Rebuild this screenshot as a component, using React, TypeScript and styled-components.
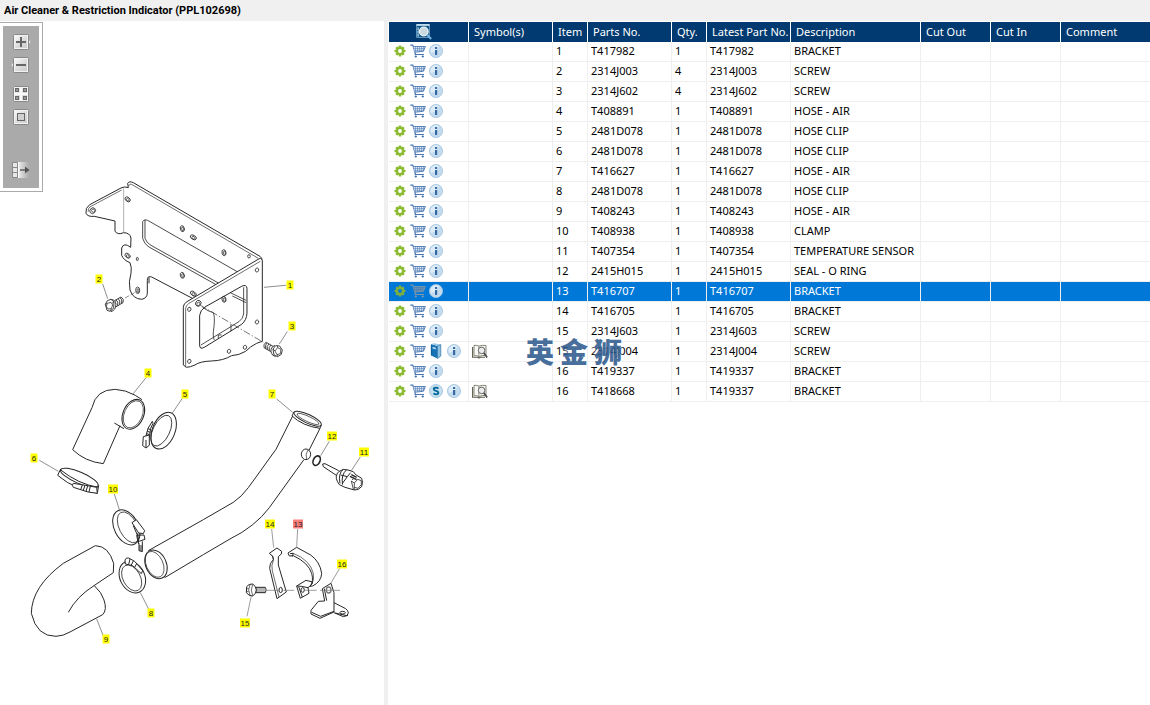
import React, { useState } from "react";
import styled, { createGlobalStyle } from "styled-components";

const GlobalStyle = createGlobalStyle`
  *, *::before, *::after { box-sizing: border-box; }
  html, body, #root { height: 100%; }
  body {
    margin: 0;
    background: #fff;
    color: #000;
    font-family: "Noto Sans", "Noto Sans CJK SC", sans-serif;
    font-size: 11px;
  }
`;

const Page = styled.div`
  display: flex;
  flex-direction: column;
  min-height: 100%;
`;

const TitleBar = styled.h1`
  margin: 0;
  height: 21px;
  padding: 0 4px;
  background: #f0f0f0;
  font-family: Roboto, sans-serif;
  font-size: 11px;
  font-weight: 700;
  line-height: 22px;
`;

const Split = styled.main`
  display: flex;
  flex: 1;
`;

const DrawingPane = styled.section`
  position: relative;
  flex: 0 0 384px;
`;

const Splitter = styled.div`
  flex: 0 0 4px;
  background: #f0f0f0;
`;

const ListPane = styled.section`
  position: relative;
  flex: 1;
  min-width: 0;
  padding: 1px 0 0 1px;
`;

const ToolFrame = styled.div`
  position: absolute;
  top: 1px;
  left: 0;
  padding: 3px;
  border: 1px solid #aaa;
  border-left: 0;
`;

const ToolBar = styled.div`
  display: flex;
  flex-direction: column;
  align-items: center;
  gap: 5px;
  width: 36px;
  height: 162px;
  padding-top: 7px;
  background: #aaa;
`;

const ToolButton = styled.button<{ $before?: number }>`
  display: block;
  width: 20px;
  height: 18px;
  margin: ${(p) => p.$before ?? 0}px 0 0;
  padding: 0;
  border: 0;
  background: none;
  cursor: pointer;
`;

const Drawing = styled.svg`
  display: block;
  width: 384px;
  height: 684px;
`;

const Table = styled.table`
  width: 100%;
  table-layout: fixed;
  border-collapse: separate;
  border-spacing: 0;
`;

const Col = styled.col<{ $w?: number }>`
  width: ${(p) => (p.$w ? `${p.$w}px` : "auto")};
`;

const HeadCell = styled.th<{ $icon?: boolean }>`
  height: 20px;
  padding: 0 0 0 ${(p) => (p.$icon ? 26 : 5)}px;
  border-right: 1px solid #fff;
  background: #003a70;
  color: #fff;
  font-weight: 400;
  line-height: 18px;
  text-align: left;
  white-space: nowrap;
  &:last-child { border-right: 0; }
`;

const Row = styled.tr<{ $selected: boolean }>`
  background: ${(p) => (p.$selected ? "#0078d7" : "#fff")};
  color: ${(p) => (p.$selected ? "#fff" : "#000")};
`;

const Cell = styled.td`
  height: 20px;
  padding: 0 0 2px 3px;
  border-right: 1px solid #efefef;
  border-bottom: 1px solid #efefef;
  line-height: 16px;
  white-space: nowrap;
  &:last-child { border-right: 0; }
`;

const IconCell = styled(Cell)`
  padding: 0 0 1px 2px;
`;

const Actions = styled.div`
  display: flex;
`;

const IconButton = styled.button`
  display: flex;
  align-items: center;
  justify-content: center;
  width: 18px;
  height: 18px;
  padding: 0;
  border: 0;
  background: none;
  cursor: pointer;
`;

const Watermark = styled.div`
  position: absolute;
  top: 317px;
  left: 138px;
  display: flex;
  gap: 6px;
  color: #2f5b8e;
  font-family: "Noto Sans CJK SC", sans-serif;
  font-size: 28px;
  font-weight: 900;
  line-height: 26px;
  opacity: 0.88;
  pointer-events: none;
  text-shadow: 0 0 3px rgba(255, 255, 255, 0.8), 0 0 3px rgba(255, 255, 255, 0.8);
`;

/* ---------- icons ---------- */

const GearIcon = ({ dim }: { dim: boolean }) => (
  <svg width="12" height="12" viewBox="0 0 12 12" aria-hidden="true">
    <g fill={dim ? "#7fb03c" : "#8aba2e"}>
      {[0, 45, 90, 135].map((a) => (
        <rect key={a} x="4.7" y="0.6" width="2.6" height="10.8" rx="0.6" transform={`rotate(${a} 6 6)`} />
      ))}
      <circle cx="6" cy="6" r="4" />
    </g>
    <circle cx="6" cy="6" r="1.9" fill={dim ? "#0078d7" : "#fff"} />
  </svg>
);

const CartIcon = ({ dim }: { dim: boolean }) => {
  const c = dim ? "#7f95a8" : "#4877b2";
  return (
    <svg width="16" height="14" viewBox="0 0 16 14" aria-hidden="true" fill="none" stroke={c}>
      <path d="M0.3 1.2H2.8L5.6 10.6M4.6 10.5H14" strokeWidth="1.2" />
      <path d="M3.4 2.5H15.4L13.4 7.3L4.9 8.2" fill={dim ? "#3f7fb8" : "#dde8f4"} strokeWidth="0.9" />
      <path d="M5.5 2.5V8M7.5 2.5V8M9.5 2.5V7.8M11.5 2.5V7.6M13.5 2.5V7M4 4.5H14.5M4.5 6.3H13.8" strokeWidth="0.5" />
      <circle cx="5.8" cy="12.5" r="0.7" fill={c} />
      <circle cx="12.8" cy="12.5" r="0.7" fill={c} />
    </svg>
  );
};

const InfoIcon = () => (
  <svg width="14" height="14" viewBox="0 0 14 14" aria-hidden="true">
    <circle cx="7" cy="7" r="6.6" fill="#c3dbee" stroke="#a3c4e0" strokeWidth="0.8" />
    <path d="M2 9A5.5 5.5 0 0 1 10 2.3Q10 7 2 9Z" fill="#deedf8" />
    <rect x="6" y="3" width="2.2" height="2" fill="#356aa5" />
    <path d="M6 6H8.2V11H6Z" fill="#356aa5" />
  </svg>
);

const SuperIcon = () => (
  <svg width="14" height="14" viewBox="0 0 14 14" aria-hidden="true">
    <circle cx="7" cy="7" r="6.6" fill="#c3dfee" stroke="#a3c4e0" strokeWidth="0.8" />
    <path d="M9.3 4.6Q8.6 3.7 7 3.7Q4.8 3.7 4.8 5.2Q4.8 6.4 7 6.9Q9.4 7.5 9.4 8.8Q9.4 10.3 7 10.3Q5.2 10.3 4.6 9.3" fill="none" stroke="#00659b" strokeWidth="1.8" />
  </svg>
);

const BookIcon = () => (
  <svg width="12" height="16" viewBox="0 0 12 16" aria-hidden="true">
    <path d="M1 1L7.5 3V15.5L1 12.5Z" fill="#1672b5" />
    <path d="M1 1L4 0.3L10.8 1.6L7.5 3Z" fill="#9cc9e5" />
    <path d="M7.5 3L10.8 1.6V13L7.5 15.5Z" fill="#8cc1e2" stroke="#16629b" strokeWidth="0.6" />
    <path d="M2.6 3.7L5.8 4.7V6.6L2.6 5.5Z" fill="#b8ddf2" />
    <path d="M1.3 2V12.2" stroke="#0a5590" strokeWidth="0.7" />
  </svg>
);

const OpenBookIcon = () => (
  <svg width="16" height="15" viewBox="0 0 16 15" aria-hidden="true" fill="none">
    <path d="M2 1.5Q5 0.8 7 2.2Q10 0.8 14 1.5V11.5Q10 11 7 12.5Q4.5 11.2 2 11.8Z" fill="#f8f8f5" stroke="#77776c" strokeWidth="0.9" />
    <path d="M0.6 3V13.3H6L7 14L8.5 13.3H13" stroke="#5c5c4c" strokeWidth="1.1" />
    <path d="M6.8 2.3V12.4" stroke="#77776c" strokeWidth="0.8" />
    <circle cx="9.6" cy="6.4" r="3.3" fill="#ececec" stroke="#666" strokeWidth="1" />
    <path d="M11.8 9L15.2 13.6" stroke="#444" strokeWidth="1.6" />
  </svg>
);

const SearchSheetIcon = () => (
  <svg width="16" height="16" viewBox="0 0 16 16" aria-hidden="true" fill="none">
    <path d="M0.5 0.5H13.5V13.5H0.5Z" fill="#0f568a" stroke="#5c91b8" />
    <path d="M0.5 1H13.5" stroke="#d8edf8" strokeWidth="1.6" />
    <path d="M2.2 3V13M0.8 5H3M0.8 8H3M0.8 11H3" stroke="#a8cbe0" strokeWidth="0.9" />
    <circle cx="7.8" cy="7.5" r="4.3" fill="#cad8e0" stroke="#eef6fa" strokeWidth="1.3" />
    <path d="M11.2 11L15.2 15" stroke="#72b3df" strokeWidth="2" />
  </svg>
);

type ToolKind = "in" | "out" | "grid" | "fit" | "panel";

const ToolIcon = ({ kind }: { kind: ToolKind }) => (
  <svg width="20" height="18" viewBox="0 0 20 18" aria-hidden="true" fill="none">
    <defs>
      <linearGradient id={`face-${kind}`} x1="0" y1="0" x2="1" y2="1">
        <stop offset="0" stopColor="#fff" />
        <stop offset="0.5" stopColor="#ddd" />
        <stop offset="1" stopColor="#c8c8c8" />
      </linearGradient>
      <linearGradient id={`fade-${kind}`} x1="0" y1="0" x2="1" y2="0">
        <stop offset="0" stopColor="#eee" />
        <stop offset="1" stopColor="#aaa" />
      </linearGradient>
    </defs>
    {kind === "in" && <path d="M17 6L19.5 9L17 12Z" fill="#eee" />}
    {kind === "out" && <path d="M3 6L0.5 9L3 12Z" fill="#eee" />}
    {kind !== "panel" && (
      <rect x="2.5" y="1.5" width="15" height="15" rx="1" fill={`url(#face-${kind})`} stroke="#888" />
    )}
    {kind !== "panel" && <rect x="3.5" y="2.5" width="13" height="13" stroke="#f2f2f2" />}
    {kind === "in" && <path d="M5 9H15M10 4V14" stroke="#666" strokeWidth="2" />}
    {kind === "out" && <path d="M5 9H15" stroke="#666" strokeWidth="2" />}
    {kind === "fit" && <rect x="6.5" y="5.5" width="7" height="7" fill="#d0d0d0" stroke="#666" />}
    {kind === "grid" && (
      <>
        <path d="M10 2V16M3 9H17" stroke="#f8f8f8" strokeWidth="2" />
        <g fill="#999" stroke="#666">
          <rect x="4.5" y="3.5" width="3" height="3" />
          <rect x="12.5" y="3.5" width="3" height="3" />
          <rect x="4.5" y="11.5" width="3" height="3" />
          <rect x="12.5" y="11.5" width="3" height="3" />
        </g>
      </>
    )}
    {kind === "panel" && (
      <>
        <rect x="7" y="1" width="11" height="16" fill={`url(#fade-${kind})`} />
        <path d="M1.5 1.5H6.5V16.5H1.5ZM1.5 6.5H6.5M1.5 11.5H6.5" fill="#e8e8e8" stroke="#888" />
        <path d="M7.5 1V17" stroke="#fff" />
        <path d="M9 9H16" stroke="#555" strokeWidth="1.4" />
        <path d="M14 5.5L18.5 9L14 12.5Z" fill="#555" />
      </>
    )}
  </svg>
);

/* ---------- exploded view ---------- */

const callouts: [string, number, number][] = [
  ["1", 290, 285], ["2", 99, 279], ["3", 292, 326], ["4", 148, 373], ["5", 185, 394],
  ["6", 34, 458], ["7", 272, 394], ["8", 151, 613], ["9", 106, 639], ["10", 113, 489],
  ["11", 364, 452], ["12", 332, 436], ["13", 298, 524], ["14", 270, 524], ["15", 245, 623], ["16", 342, 564],
];

const holes: [number, number, number, number, number][] = [
  [53, 122, 9, 8, -45], [158, 88, 9, 6, 40], [322, 176, 6, 9, -15], [355, 202, 10, 6, 30], [447, 248, 6, 9, -10],
  [522, 259, 4, 5, 0], [158, 257, 9, 6, 40], [187, 267, 3, 5, 0], [322, 316, 6, 9, -15], [188, 361, 6, 10, 0],
  [355, 371, 10, 6, 35], [370, 400, 8, 9, 30], [343, 418, 5, 6, 20], [546, 300, 5, 6, 20], [546, 456, 5, 6, 20],
  [510, 532, 5, 6, 20], [462, 544, 5, 6, 20], [343, 574, 5, 6, 20], [447, 388, 6, 9, -10],
];

const ExplodedView = () => (
  <Drawing viewBox="0 21 384 684" role="img" aria-label="Exploded view">
    <g fill="none" stroke="#262626" strokeWidth="3" strokeLinejoin="round">
      <g transform="translate(75 170) scale(.3333)">
        <path d="M160 53Q150 48 138 54L44 104Q30 114 33 130Q38 141 58 139L120 153L120 184Q130 196 145 188Q165 188 168 204L167 232Q146 216 140 234L140 256Q146 271 165 278Q171 292 168 310Q160 335 165 360Q174 387 200 388Q216 385 217 370L217 332Q216 316 230 321L375 397" />
        <path d="M160 53L158 40Q163 32 175 38L555 259Q563 264 560 273" />
        <path d="M160 47L168 42L550 265M40 125Q38 113 50 108L140 60" strokeWidth="2" />
        <path d="M146 55V190" stroke="#888" strokeWidth="2" />
        <path d="M490 307L225 155Q208 144 203 155V205Q207 222 222 231L425 345M210 150V205Q214 218 228 226L432 340" strokeWidth="2.5" />
        <path d="M222 340L222 322" />
        <path d="M325 585V412Q325 401 336 395L546 270Q560 260 562 272V514L545 520Q525 530 512 544Q492 556 470 557Q445 572 410 573Q375 574 360 585Q345 592 334 592Z" fill="#fff" />
        <path d="M332 590V415Q333 406 342 400L556 274" strokeWidth="2" />
        <path d="M374 525V436Q376 420 390 411L500 349Q515 342 516 355V430Q515 450 500 463L388 532Q374 540 374 525Z" />
        <path d="M506 352V432Q504 446 492 455L378 525M382 411Q400 425 415 428Q420 440 417 470Q412 500 418 510M466 368L513 391M472 378L513 398M468 462V484M430 505V495H440" strokeWidth="2.4" />
        {holes.map(([x, y, rx, ry, a]) => (
          <g key={`${x}-${y}`} transform={`rotate(${a} ${x} ${y})`}>
            <ellipse cx={x} cy={y} rx={rx} ry={ry} strokeWidth="2.4" />
            {rx > 5 && <ellipse cx={x + 1} cy={y + 1} rx={rx / 2} ry={ry / 1.6} strokeWidth="2" />}
          </g>
        ))}
        <g strokeWidth="2.6">
          <path d="M119 392L138 381Q149 387 144 398L122 411Z" fill="#fff" />
          <path d="M123 389Q131 395 128 407M129 386Q137 391 134 403M135 383Q143 388 140 400" />
          <path d="M106 388Q122 388 123 404Q122 421 108 425" fill="#fff" />
          <path d="M91 403L97 392L108 388L117 396L116 414L106 424L96 421Z" fill="#fff" />
          <path d="M97 400L108 397L113 405L109 416L99 417L94 409ZM91 403L97 400M117 396L111 400M106 424L109 416" strokeWidth="2.2" />
          <path d="M594 529L574 517Q564 522 568 534L590 546Z" fill="#fff" />
          <path d="M588 525Q580 531 583 542M582 522Q574 528 577 539M576 519Q570 524 572 536" />
          <path d="M600 526Q586 532 588 546Q591 558 602 560" fill="#fff" />
          <path d="M594 537L602 527L614 528L622 540L619 553L608 560L597 555Z" fill="#fff" />
          <path d="M600 543L608 533L618 538L616 551L606 554ZM594 537L600 543M608 533L607 527M606 554L608 560" strokeWidth="2.2" />
        </g>
        <g stroke="#666" strokeWidth="2.2">
          <path d="M567 352L633 346M83 342L98 386M637 485L613 522" />
          <path d="M375 405L565 517" strokeDasharray="22 6 4 6" stroke="#444" />
          <path d="M150 384L190 362" strokeDasharray="14 5" />
        </g>
      </g>

      <g transform="translate(20 360) scale(.3333)">
        <path d="M158 269L216 143Q228 88 286 88Q318 90 346 106L366 119M158 269Q195 305 250 311L300 197M283 189L312 206" />
        <ellipse cx="340" cy="163" rx="31" ry="47" transform="rotate(24 340 163)" />
        <ellipse cx="340" cy="163" rx="27" ry="43" transform="rotate(24 340 163)" strokeWidth="2" />
        <ellipse cx="431" cy="212" rx="34" ry="58" transform="rotate(22 431 212)" />
        <ellipse cx="424" cy="212" rx="25" ry="50" transform="rotate(26 424 212)" strokeWidth="2.4" />
        <path d="M397 184L384 205L378 228L388 233L392 205L399 190Z" fill="#fff" />
        <path d="M370 230L388 225V256L378 264L368 257ZM378 240V262M384 206L392 209M382 214L391 217M380 221L389 224" fill="#fff" />
        <ellipse cx="178" cy="353" rx="61" ry="17" transform="rotate(23 178 353)" />
        <path d="M122 327L113 346Q140 370 175 383L232 400L236 376M122 330Q175 372 234 382" />
        <path d="M160 370L196 376L230 382L232 400L204 396L160 382Q154 376 160 370Z" fill="#fff" />
        <path d="M187 375L182 389M195 376L190 391M203 378L198 394M211 379L207 396" />
        <path d="M379 52L338 103M487 115L455 162M58 301L115 334" stroke="#666" strokeWidth="2.2" />
      </g>

      <g transform="translate(20 480) scale(.3333)">
        <path d="M226 197Q266 198 281 250L280 278L222 317Q170 350 145 397M226 197L130 250Q35 320 34 400Q50 470 108 469Q130 468 150 456L248 404Q262 390 252 360Q246 338 223 317" />
        <ellipse cx="408" cy="253" rx="31" ry="45" transform="rotate(-24 408 253)" />
        <ellipse cx="404" cy="253" rx="25" ry="41" transform="rotate(-24 404 253)" strokeWidth="2" />
        <path d="M385 212L550 119M434 293L550 224" />
        <ellipse cx="337" cy="291" rx="37" ry="50" transform="rotate(-26 337 291)" />
        <ellipse cx="335" cy="294" rx="26" ry="42" transform="rotate(-28 335 294)" strokeWidth="2.2" />
        <path d="M315 240Q318 232 326 234L344 244L368 272L364 281L338 257L316 252Z" fill="#fff" />
        <path d="M330 237L326 254M340 243L333 257M350 251L344 262" />
        <ellipse cx="319" cy="142" rx="36" ry="56" transform="rotate(-27 319 142)" />
        <ellipse cx="325" cy="142" rx="27" ry="50" transform="rotate(-27 325 142)" strokeWidth="2.2" />
        <path d="M336 128L349 119L374 152L370 161L356 159Z" fill="#fff" />
        <path d="M350 166L372 165L375 178L354 185ZM352 160L356 192M357 190V212L367 215V184M357 198H367M357 204H367M357 210H367M340 137L352 165" />
        <path d="M283 42L300 95M386 387L361 338M250 468L230 417" stroke="#666" strokeWidth="2.2" />
      </g>

      <g transform="translate(190 380) scale(.3333)">
        <ellipse cx="353" cy="116" rx="45" ry="13" transform="rotate(25 353 116)" />
        <ellipse cx="354" cy="117" rx="36" ry="8" transform="rotate(25 354 117)" strokeWidth="2" />
        <path d="M312 96L306 108Q338 138 390 145L394 135M308 108L258 208L175 323Q155 350 130 367L40 419M390 145L357 211M341 240L238 383Q195 440 120 477L40 524" />
        <ellipse cx="348" cy="223" rx="14" ry="16" />
        <path d="M354 210Q345 222 350 237" strokeWidth="2" />
        <ellipse cx="380" cy="242" rx="10" ry="15" transform="rotate(25 380 242)" strokeWidth="5" />
        <path d="M398 252L405 251L446 272M398 252L400 260L439 286" />
        <path d="M442 304Q434 288 446 275Q460 264 474 270L490 275L497 284L515 295Q520 306 515 320Q504 332 493 330L465 322L448 314Z" fill="#fff" />
        <path d="M460 268Q444 280 450 310M470 269Q452 285 458 314M452 285L472 290L482 278M456 312L472 290" />
        <path d="M493 309L503 298L514 302L514 314L504 325L493 322ZM493 309L484 303M493 330V322M484 303L490 328" strokeWidth="2.4" />
        <path d="M480 289L500 299M484 284L500 292M488 293V299" strokeWidth="4" />
        <path d="M260 57L308 97M418 184L392 227M511 231L484 272" stroke="#666" strokeWidth="2.2" />
      </g>

      <g transform="translate(230 510) scale(.3333)">
        <path d="M118 130L141 114L155 124L154 132L145 140V165L169 246L141 266L119 175Q118 160 130 149L127 138Z" />
        <path d="M124 134Q134 140 130 152Q123 165 127 182L147 261" strokeWidth="2" />
        <ellipse cx="152" cy="240" rx="5" ry="8" />
        <path d="M174 129L200 112L242 135Q270 155 275 190Q274 215 248 228L240 229Q252 215 245 190Q235 158 190 137L178 138ZM180 131L190 130L187 140" />
        <path d="M190 130Q240 150 250 190Q253 208 246 222" strokeWidth="2" />
        <path d="M200 228L228 211L248 216L244 225L234 233L237 250L211 265ZM200 228L214 229L234 233M206 230L217 261" />
        <ellipse cx="218" cy="240" rx="5" ry="7" />
        <path d="M284 273L277 236L303 220L312 248V306L270 325L243 312V301L265 274L284 273M312 278L347 296Q361 307 350 317L316 309M312 308L340 320L354 316M245 307L272 319L312 304M283 236L290 272" />
        <ellipse cx="296" cy="240" rx="7" ry="9" strokeWidth="4" stroke="#777" />
        <ellipse cx="338" cy="308" rx="8" ry="4" />
        <path d="M78 232H106Q111 240 106 248H78Z" fill="#fff" />
        <path d="M84 232V248M90 232V248M96 232V248M102 232V248" strokeWidth="2" />
        <path d="M50 230Q56 221 68 222Q78 228 79 240Q78 253 68 258Q56 258 49 248Z" fill="#fff" />
        <path d="M60 224Q52 240 60 256M68 223Q60 240 68 257M50 236H56M50 245H56" strokeWidth="2" />
        <path d="M110 241H148M160 241H192M222 241H260M270 241H330M125 57L131 113M203 57L200 110M329 175L303 219M51 319L64 257" stroke="#777" strokeWidth="2.2" />
      </g>
    </g>
    <g fontFamily="Liberation Sans, sans-serif" fontSize="8" textAnchor="middle">
      {callouts.map(([n, x, y]) => {
        const w = n.length > 1 ? 10 : 7;
        return (
          <g key={n}>
            <rect x={x - w / 2} y={y - 4.5} width={w} height="9" fill={n === "13" ? "#f97e7e" : "#ff0"} />
            <text x={x} y={y + 3} fill="#222">{n}</text>
          </g>
        );
      })}
    </g>
  </Drawing>
);

/* ---------- parts list ---------- */

interface Part {
  item: string;
  no: string;
  qty: string;
  latest: string;
  name: string;
  extra?: "book" | "super";
}

const part = (item: string, no: string, name: string, qty = "1", latest = no, extra?: Part["extra"]): Part => ({
  item, no, qty, latest, name, extra,
});

const parts: Part[] = [
  part("1", "T417982", "BRACKET"),
  part("2", "2314J003", "SCREW", "4"),
  part("3", "2314J602", "SCREW", "4"),
  part("4", "T408891", "HOSE - AIR"),
  part("5", "2481D078", "HOSE CLIP"),
  part("6", "2481D078", "HOSE CLIP"),
  part("7", "T416627", "HOSE - AIR"),
  part("8", "2481D078", "HOSE CLIP"),
  part("9", "T408243", "HOSE - AIR"),
  part("10", "T408938", "CLAMP"),
  part("11", "T407354", "TEMPERATURE SENSOR"),
  part("12", "2415H015", "SEAL - O RING"),
  part("13", "T416707", "BRACKET"),
  part("14", "T416705", "BRACKET"),
  part("15", "2314J603", "SCREW"),
  part("15", "2314J004", "SCREW", "1", "2314J004", "book"),
  part("16", "T419337", "BRACKET"),
  part("16", "T418668", "BRACKET", "1", "T419337", "super"),
];

const columns: [string, number?][] = [
  ["Symbol(s)", 84], ["Item", 35], ["Parts No.", 84], ["Qty.", 35], ["Latest Part No.", 84],
  ["Description", 130], ["Cut Out", 70], ["Cut In", 70], ["Comment"],
];

const tools: { kind: ToolKind; label: string; before?: number }[] = [
  { kind: "in", label: "Zoom in" },
  { kind: "out", label: "Zoom out" },
  { kind: "grid", label: "Show all", before: 6 },
  { kind: "fit", label: "Fit to window" },
  { kind: "panel", label: "Toggle list", before: 30 },
];

export default function App() {
  const [selected, setSelected] = useState(12);
  return (
    <Page>
      <GlobalStyle />
      <TitleBar>Air Cleaner &amp; Restriction Indicator (PPL102698)</TitleBar>
      <Split>
        <DrawingPane>
          <ExplodedView />
          <ToolFrame>
            <ToolBar role="toolbar" aria-label="Drawing tools">
              {tools.map((t) => (
                <ToolButton key={t.kind} type="button" aria-label={t.label} $before={t.before}>
                  <ToolIcon kind={t.kind} />
                </ToolButton>
              ))}
            </ToolBar>
          </ToolFrame>
        </DrawingPane>
        <Splitter />
        <ListPane>
          <Table>
            <colgroup>
              <Col $w={80} />
              {columns.map(([label, w]) => <Col key={label} $w={w} />)}
            </colgroup>
            <thead>
              <tr>
                <HeadCell $icon scope="col">
                  <IconButton type="button" aria-label="Search list"><SearchSheetIcon /></IconButton>
                </HeadCell>
                {columns.map(([label]) => <HeadCell key={label} scope="col">{label}</HeadCell>)}
              </tr>
            </thead>
            <tbody>
              {parts.map((p, i) => {
                const on = i === selected;
                return (
                  <Row key={i} $selected={on} onClick={() => setSelected(i)}>
                    <IconCell>
                      <Actions>
                        <IconButton type="button" aria-label="Options"><GearIcon dim={on} /></IconButton>
                        <IconButton type="button" aria-label="Add to cart"><CartIcon dim={on} /></IconButton>
                        {p.extra === "book" && <IconButton type="button" aria-label="Manual"><BookIcon /></IconButton>}
                        {p.extra === "super" && <IconButton type="button" aria-label="Supersession"><SuperIcon /></IconButton>}
                        <IconButton type="button" aria-label="Information"><InfoIcon /></IconButton>
                      </Actions>
                    </IconCell>
                    <IconCell>
                      {p.extra && <IconButton type="button" aria-label="View notes"><OpenBookIcon /></IconButton>}
                    </IconCell>
                    <Cell>{p.item}</Cell>
                    <Cell>{p.no}</Cell>
                    <Cell>{p.qty}</Cell>
                    <Cell>{p.latest}</Cell>
                    <Cell>{p.name}</Cell>
                    <Cell />
                    <Cell />
                    <Cell />
                  </Row>
                );
              })}
            </tbody>
          </Table>
          <Watermark><span>英</span><span>金</span><span>狮</span></Watermark>
        </ListPane>
      </Split>
    </Page>
  );
}
